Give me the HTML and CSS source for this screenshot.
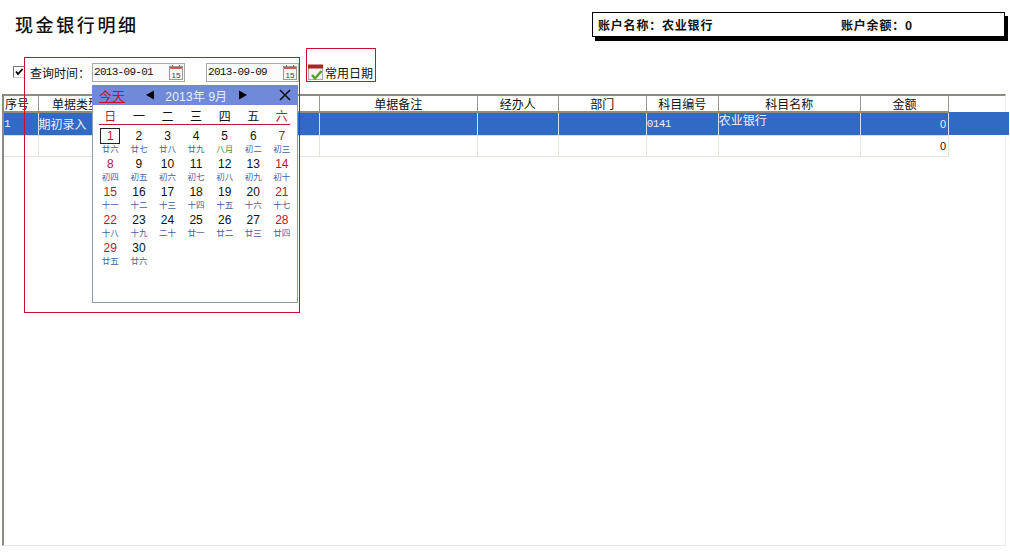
FILE: index.html
```html
<!DOCTYPE html>
<html lang="zh-CN">
<head>
    <meta charset="UTF-8">
    <title>现金银行明细</title>
    <link rel="stylesheet" href="styles.css">
</head>
<body>
<div class="page">
    <div class="top-bar">
        <h1 class="page-title">现金银行明细</h1>
        <div class="account-box">
            <span class="account-name">账户名称：农业银行</span>
            <span class="account-balance">账户余额：0</span>
        </div>
    </div>

    <div class="toolbar">
        <span class="check-box">
            <svg width="10" height="10" viewBox="0 0 10 10"><path d="M2 4.5 L4 7 L8.5 2" fill="none" stroke="#000" stroke-width="1.8"/></svg>
        </span>
        <span class="query-label">查询时间：</span>
        <div class="date-input">
            <span>2013-09-01</span>
            <svg class="cal-icon" width="16" height="17" viewBox="0 0 16 17">
                <rect x="1.5" y="2.5" width="13" height="13" fill="#f6f6f2" stroke="#9a9a90"/>
                <rect x="2" y="3" width="12" height="2" fill="#d0605a"/>
                <path d="M4.5 1 V4 M11.5 1 V4" stroke="#b55" stroke-width="1"/>
                <text x="8" y="13.5" text-anchor="middle" class="cal-icon-text">15</text>
            </svg>
        </div>
        <div class="date-input date-input-second">
            <span>2013-09-09</span>
            <svg class="cal-icon" width="16" height="17" viewBox="0 0 16 17">
                <rect x="1.5" y="2.5" width="13" height="13" fill="#f6f6f2" stroke="#9a9a90"/>
                <rect x="2" y="3" width="12" height="2" fill="#d0605a"/>
                <path d="M4.5 1 V4 M11.5 1 V4" stroke="#b55" stroke-width="1"/>
                <text x="8" y="13.5" text-anchor="middle" class="cal-icon-text">15</text>
            </svg>
        </div>
        <div class="common-dates">
            <svg width="16" height="17" viewBox="0 0 16 17">
                <rect x="0.5" y="1.5" width="14" height="14" fill="#f4f4f0" stroke="#aaa"/>
                <rect x="0" y="0.5" width="15" height="4" fill="#a8232c"/>
                <path d="M4 11 L7 14.5 L13.5 7" fill="none" stroke="#5aa02c" stroke-width="2.4"/>
            </svg>
            <span>常用日期</span>
        </div>
    </div>

    <div class="grid-frame">
        <table class="grid">
            <colgroup>
                <col class="c-no"><col class="c-type"><col class="c-hidden"><col class="c-note"><col class="c-person">
                <col class="c-dept"><col class="c-code"><col class="c-name"><col class="c-amount">
            </colgroup>
            <thead>
                <tr>
                    <th class="left">序号</th><th>单据类型</th><th></th><th>单据备注</th><th>经办人</th>
                    <th>部门</th><th>科目编号</th><th>科目名称</th><th>金额</th>
                </tr>
            </thead>
            <tbody>
                <tr class="selected">
                    <td class="mono">1</td><td>期初录入</td><td></td><td></td><td></td>
                    <td></td><td class="mono">0141</td><td class="raised">农业银行</td><td class="num">0</td>
                </tr>
                <tr>
                    <td></td><td></td><td></td><td></td><td></td>
                    <td></td><td></td><td></td><td class="num">0</td>
                </tr>
            </tbody>
        </table>
    </div>

    <div class="calendar">
        <div class="cal-head">
            <a class="cal-today">今天</a>
            <span class="cal-arrow">
                <svg width="10" height="10" viewBox="0 0 10 10"><path d="M9 0.5 V9.5 L1 5 Z" fill="#000"/></svg>
            </span>
            <span class="cal-month">2013年 9月</span>
            <span class="cal-arrow">
                <svg width="10" height="10" viewBox="0 0 10 10"><path d="M1 0.5 V9.5 L9 5 Z" fill="#000"/></svg>
            </span>
            <svg class="cal-close" width="12" height="12" viewBox="0 0 12 12"><path d="M1 1 L11 11 M11 1 L1 11" stroke="#111" stroke-width="1.6"/></svg>
        </div>
        <div class="cal-weeks">
            <span class="red">日</span><span>一</span><span>二</span><span>三</span><span>四</span><span>五</span><span class="red">六</span>
        </div>
        <div class="cal-rule"></div>
        <div class="cal-days">
            <div class="day red today"><b>1</b><i>廿六</i></div>
            <div class="day"><b>2</b><i>廿七</i></div>
            <div class="day"><b>3</b><i>廿八</i></div>
            <div class="day"><b>4</b><i>廿九</i></div>
            <div class="day"><b>5</b><i class="green">八月</i></div>
            <div class="day"><b>6</b><i>初二</i></div>
            <div class="day red"><b>7</b><i>初三</i></div>
            <div class="day red"><b>8</b><i>初四</i></div>
            <div class="day"><b>9</b><i>初五</i></div>
            <div class="day"><b>10</b><i>初六</i></div>
            <div class="day"><b>11</b><i>初七</i></div>
            <div class="day"><b>12</b><i>初八</i></div>
            <div class="day"><b>13</b><i>初九</i></div>
            <div class="day red"><b>14</b><i>初十</i></div>
            <div class="day red"><b>15</b><i>十一</i></div>
            <div class="day"><b>16</b><i>十二</i></div>
            <div class="day"><b>17</b><i>十三</i></div>
            <div class="day"><b>18</b><i>十四</i></div>
            <div class="day"><b>19</b><i>十五</i></div>
            <div class="day"><b>20</b><i>十六</i></div>
            <div class="day red"><b>21</b><i>十七</i></div>
            <div class="day red"><b>22</b><i>十八</i></div>
            <div class="day"><b>23</b><i>十九</i></div>
            <div class="day"><b>24</b><i>二十</i></div>
            <div class="day"><b>25</b><i>廿一</i></div>
            <div class="day"><b>26</b><i>廿二</i></div>
            <div class="day"><b>27</b><i>廿三</i></div>
            <div class="day red"><b>28</b><i>廿四</i></div>
            <div class="day red"><b>29</b><i>廿五</i></div>
            <div class="day"><b>30</b><i>廿六</i></div>
        </div>
    </div>

    <div class="mark mark-calendar"></div>
    <div class="mark mark-common"></div>
</div>
</body>
</html>
```

FILE: styles.css
```css
html, body {
    margin: 0;
    padding: 0;
    overflow: hidden;
    background: #fff;
}

.page {
    position: relative;
    width: 1010px;
    height: 553px;
    display: flex;
    flex-direction: column;
    font-family: "Noto Sans CJK SC", sans-serif;
    font-size: 12px;
    color: #111;
}

.top-bar {
    display: flex;
    justify-content: space-between;
    align-items: flex-start;
    height: 48px;
    padding: 12px 5px 0 15px;
    box-sizing: border-box;
}

.page-title {
    margin: 0;
    font-size: 18px;
    line-height: 25px;
    letter-spacing: 2.6px;
    font-weight: 500;
}

.account-box {
    width: 413px;
    height: 25px;
    box-sizing: border-box;
    border: 1px solid #000;
    box-shadow: 3px 4px 0 #000;
    display: flex;
    align-items: center;
    padding-left: 5px;
    font-size: 12px;
    letter-spacing: 0.8px;
    font-weight: 700;
    background: #fff;
}

.account-name {
    width: 243px;
}

.toolbar {
    display: flex;
    align-items: center;
    height: 22px;
    margin-top: 13px;
    padding-left: 13px;
}

.check-box {
    flex: none;
    width: 10px;
    height: 10px;
    border: 1px solid #777;
    border-right-color: #ccc;
    border-bottom-color: #ccc;
    display: flex;
    margin-right: 5px;
}

.query-label {
    flex: none;
    width: 62px;
    white-space: nowrap;
    font-size: 12px;
}

.date-input {
    flex: none;
    width: 93px;
    height: 19px;
    box-sizing: border-box;
    border: 1px solid #a8aca8;
    background: #fbfbfb;
    display: flex;
    align-items: center;
    justify-content: space-between;
    padding: 0 0 0 1px;
    font-family: "Liberation Mono", monospace;
    font-size: 11px;
    letter-spacing: -0.7px;
}

.date-input-second {
    margin-left: 21px;
}

.cal-icon {
    flex: none;
}

.cal-icon-text {
    font-family: "Liberation Sans", sans-serif;
    font-size: 8px;
    letter-spacing: 0;
    fill: #445;
}

.common-dates {
    display: flex;
    align-items: center;
    gap: 1px;
    margin-left: 9px;
}

.grid-frame {
    flex: none;
    height: 452px;
    margin: 11px 0 0 2px;
    box-sizing: border-box;
    border-top: 2px solid #8c8c84;
    border-left: 2px solid #8c8c84;
    border-bottom: 1px solid #e8e8e8;
    border-right: 1px solid #f0f0f0;
    width: 1004px;
}

.grid {
    border-collapse: collapse;
    table-layout: fixed;
    width: 945px;
    font-size: 12px;
}

.c-no { width: 34px; }
.c-type { width: 76px; }
.c-hidden { width: 205px; }
.c-note { width: 158px; }
.c-person { width: 81px; }
.c-dept { width: 88px; }
.c-code { width: 72px; }
.c-name { width: 142px; }
.c-amount { width: 88px; }

.grid th {
    height: 15px;
    padding: 0;
    font-weight: 400;
    line-height: 15px;
    border-right: 1px solid #9a9a92;
    border-bottom: 2px solid #8c8c84;
    background: #fff;
    overflow: hidden;
    white-space: nowrap;
}

.grid th.left {
    text-align: left;
    padding-left: 1px;
}

.grid td {
    height: 21px;
    padding: 0;
    border-right: 1px solid #e6e6de;
    border-bottom: 1px solid #e6e6de;
    white-space: nowrap;
    overflow: hidden;
    box-sizing: border-box;
}

.grid .selected td {
    height: 23px;
    background: #316ac5;
    color: #eef;
    border-right-color: #cfe0f5;
    border-bottom-color: #cfe0f5;
}

/* selected row runs on past the last column */
.selected {
    box-shadow: 60px 0 0 #316ac5;
}

.grid .mono {
    font-family: "Liberation Mono", monospace;
    font-size: 11px;
    letter-spacing: -0.6px;
}

.grid .raised {
    vertical-align: top;
    line-height: 14px;
}

.grid .num {
    text-align: right;
    font-family: "Liberation Sans", sans-serif;
    font-size: 11px;
    padding-right: 2px;
}

.calendar {
    position: absolute;
    left: 92px;
    top: 85px;
    width: 206px;
    height: 218px;
    box-sizing: border-box;
    border: 1px solid #8c9cb4;
    border-top: none;
    background: #fff;
}

.cal-head {
    display: flex;
    align-items: center;
    height: 20px;
    margin: 0 -1px;
    background: #7089d8;
    color: #e8eeff;
    font-family: "Liberation Sans", sans-serif;
    font-size: 12px;
}

.cal-today {
    margin-left: 7px;
    width: 46px;
    color: #c8102e;
    text-decoration: underline;
    font-family: "Noto Sans CJK SC", sans-serif;
    font-size: 13px;
}

.cal-arrow {
    display: flex;
}

.cal-month {
    width: 83px;
    text-align: center;
    letter-spacing: 0.2px;
}

.cal-close {
    margin-left: 31px;
}

.cal-weeks {
    display: grid;
    grid-template-columns: repeat(7, 28.6px);
    margin: 0 3px;
    height: 19px;
    line-height: 22px;
    text-align: center;
    font-size: 12px;
}

.cal-rule {
    height: 1px;
    margin: 0 7px 0 6px;
    background: #b01c2e;
}

.cal-days {
    display: grid;
    grid-template-columns: repeat(7, 28.6px);
    grid-auto-rows: 28px;
    margin: 4px 3px 0;
    text-align: center;
}

.day b {
    display: block;
    font-family: "Liberation Sans", sans-serif;
    font-weight: 400;
    font-size: 12px;
    line-height: 14px;
    height: 14px;
}

.day i {
    display: block;
    font-style: normal;
    font-size: 8.5px;
    line-height: 10px;
    color: #3f5f9f;
}

.day.red b,
.cal-weeks .red {
    color: #b01c2e;
}

.day i.green {
    color: #3f8f3f;
}

.day.today b {
    box-sizing: border-box;
    width: 20px;
    height: 16px;
    line-height: 14px;
    margin: -1px auto -1px;
    border: 1px solid #222;
}

.mark {
    position: absolute;
    box-sizing: border-box;
    border: 1px solid #c8102e;
    pointer-events: none;
}

.mark-calendar {
    left: 24px;
    top: 57px;
    width: 276px;
    height: 256px;
}

.mark-common {
    left: 306px;
    top: 48px;
    width: 70px;
    height: 34px;
}
```
